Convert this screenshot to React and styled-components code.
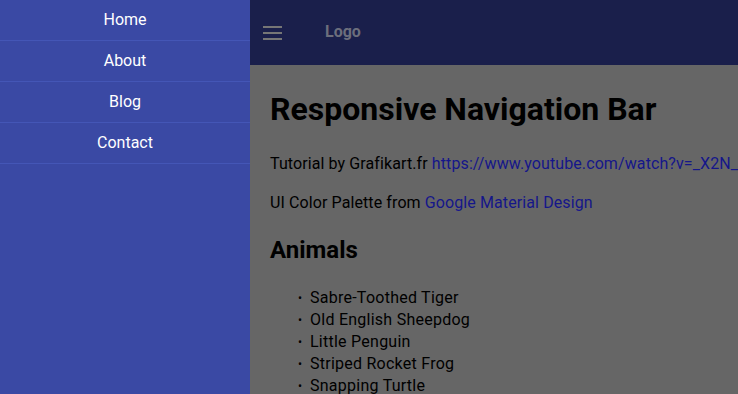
import React from 'react';
import styled, { createGlobalStyle } from 'styled-components';

const GlobalStyle = createGlobalStyle`
    html, body {
        margin: 0;
        padding: 0;
        height: 100%;
        overflow: hidden;
    }
    body {
        font-family: Roboto, "Liberation Sans", sans-serif;
        font-size: 16px;
        line-height: 1.4;
        background-color: #666666;
    }
`;

const Layout = styled.div`
    display: grid;
    grid-template-columns: 250px 1fr;
    width: 738px;
    height: 394px;
    overflow: hidden;
`;

const SideNav = styled.nav`
    background-color: #3a49a4;
    height: 100%;
`;

const NavList = styled.ul`
    list-style: none;
    margin: 0;
    padding: 0;
`;

const NavItem = styled.li`
    border-bottom: 1px solid #4456b6;
`;

const NavLink = styled.a`
    display: flex;
    align-items: center;
    justify-content: center;
    height: 40px;
    color: #ffffff;
    text-decoration: none;
    font-size: 16px;
`;

const Main = styled.div`
    display: flex;
    flex-direction: column;
    min-width: 0;
    overflow: hidden;
`;

const TopBar = styled.header`
    display: flex;
    align-items: center;
    height: 65px;
    flex-shrink: 0;
    padding: 0 0 0 13px;
    background-color: #1a1f4b;
`;

const Burger = styled.button`
    display: flex;
    flex-direction: column;
    justify-content: space-between;
    width: 19px;
    height: 14px;
    padding: 0;
    margin: 0 43px 0 0;
    border: none;
    background: none;
    cursor: pointer;
`;

const BurgerLine = styled.span`
    display: block;
    height: 2px;
    background-color: #767676;
`;

const Logo = styled.a`
    color: #6c6e7c;
    font-weight: 700;
    font-size: 16px;
    text-decoration: none;
`;

const Content = styled.main`
    padding: 0 20px;
    color: #000000;
    white-space: nowrap;
`;

const Title = styled.h1`
    font-size: 32px;
    margin: 22px 0 21px;
`;

const Paragraph = styled.p`
    margin: 16px 0 17px;
    letter-spacing: 0.1px;
`;

const Link = styled.a`
    color: #15168a;
    text-decoration: none;
`;

const SubTitle = styled.h2`
    font-size: 24px;
    margin: 19px 0 20px;
`;

const AnimalList = styled.ul`
    list-style: none;
    margin: 0;
    padding-left: 40px;
    line-height: 22px;
`;

const Animal = styled.li`
    position: relative;
    letter-spacing: 0.25px;

    &::before {
        content: '•';
        position: absolute;
        left: -12px;
        font-size: 12px;
    }
`;

const links = ['Home', 'About', 'Blog', 'Contact'];
const animals = [
    'Sabre-Toothed Tiger',
    'Old English Sheepdog',
    'Little Penguin',
    'Striped Rocket Frog',
    'Snapping Turtle',
    'Red Panda',
];

const App = () => {
    return (
        <>
            <GlobalStyle />
            <Layout>
                <SideNav>
                    <NavList>
                        {links.map((l) => (
                            <NavItem key={l}>
                                <NavLink href="#">{l}</NavLink>
                            </NavItem>
                        ))}
                    </NavList>
                </SideNav>
                <Main>
                    <TopBar>
                        <Burger aria-label="menu">
                            <BurgerLine />
                            <BurgerLine />
                            <BurgerLine />
                        </Burger>
                        <Logo href="#">Logo</Logo>
                    </TopBar>
                    <Content>
                        <Title>Responsive Navigation Bar</Title>
                        <Paragraph>
                            Tutorial by Grafikart.fr{' '}
                            <Link href="#">https://www.youtube.com/watch?v=_X2N_DvG6bQ</Link>
                        </Paragraph>
                        <Paragraph>
                            UI Color Palette from <Link href="#">Google Material Design</Link>
                        </Paragraph>
                        <SubTitle>Animals</SubTitle>
                        <AnimalList>
                            {animals.map((a) => (
                                <Animal key={a}>{a}</Animal>
                            ))}
                        </AnimalList>
                    </Content>
                </Main>
            </Layout>
        </>
    );
};

export default App;
